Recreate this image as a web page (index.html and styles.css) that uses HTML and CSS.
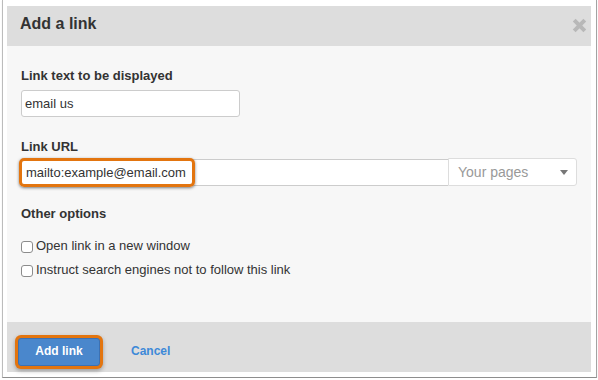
FILE: index.html
```html
<!DOCTYPE html>
<html>
<head>
<meta charset="utf-8">
<link rel="stylesheet" href="styles.css">
</head>
<body>
<div class="frame">
  <div class="dialog">
    <div class="header">
      <h1 class="title">Add a link</h1>
      <svg class="close" width="15" height="15" viewBox="0 0 15 15"><path d="M2.2 2.2 L12.8 12.8 M12.8 2.2 L2.2 12.8" stroke="#b8b8b8" stroke-width="4" stroke-linecap="butt" fill="none"/></svg>
    </div>
    <div class="body">
      <div class="label">Link text to be displayed</div>
      <input class="text-input" type="text" value="email us">
      <div class="label label-url">Link URL</div>
      <div class="url-row">
        <div class="url-wrap">
          <input class="url-input" type="text" value="mailto:example@email.com">
          <span class="highlight"></span>
        </div>
        <div class="select">
          <span>Your pages</span>
          <span class="caret"></span>
        </div>
      </div>
      <div class="label label-options">Other options</div>
      <label class="check-row first"><span class="box"></span>Open link in a new window</label>
      <label class="check-row"><span class="box"></span>Instruct search engines not to follow this link</label>
    </div>
    <div class="footer">
      <button class="btn-primary">Add link</button>
      <a class="cancel">Cancel</a>
    </div>
  </div>
</div>
</body>
</html>
```

FILE: styles.css
```css
html, body {
  margin: 0;
  padding: 0;
  background: #ffffff;
}
body {
  font-family: "Liberation Sans", Arial, sans-serif;
  color: #333333;
}
.frame {
  box-sizing: border-box;
  width: 595px;
  margin-left: 2px;
  padding: 6px 5px 5px 4px;
  background: #ffffff;
  border-left: 1px solid #bcbcbc;
  border-right: 1px solid #a3a3a3;
  border-bottom: 1px solid #8e8e8e;
  box-shadow: 0 1px 1px rgba(0,0,0,0.12);
}
.dialog {
  width: 584px;
  height: 366px;
  display: flex;
  flex-direction: column;
}
.header {
  box-sizing: border-box;
  height: 40px;
  background: #dddddd;
  display: flex;
  justify-content: space-between;
  align-items: flex-start;
  padding: 8px 4px 0 13px;
}
.title {
  margin: 0;
  font-size: 16px;
  line-height: 19px;
  font-weight: bold;
  color: #333333;
}
.close {
  margin-top: 4px;
  display: block;
}
.body {
  flex: 1;
  background: #f7f7f7;
  padding: 22px 14px 0;
}
.label {
  font-size: 13px;
  line-height: 15px;
  font-weight: bold;
  color: #333333;
}
.text-input {
  display: block;
  box-sizing: border-box;
  margin: 7px 0 0;
  width: 219px;
  height: 27px;
  border: 1px solid #cccccc;
  border-radius: 3px;
  background: #ffffff;
  padding: 0 0 0 3px;
  font-family: "Liberation Sans", Arial, sans-serif;
  font-size: 13px;
  color: #333333;
  outline: none;
}
.label-url {
  margin-top: 22px;
}
.url-row {
  display: flex;
  margin-top: 4px;
}
.url-wrap {
  position: relative;
  width: 427px;
  height: 27px;
  margin-top: 1px;
}
.url-input {
  display: block;
  box-sizing: border-box;
  margin: 0;
  width: 427px;
  height: 27px;
  border: 1px solid #cccccc;
  border-right: none;
  border-radius: 3px 0 0 3px;
  background: #ffffff;
  padding: 0 0 0 4px;
  font-family: "Liberation Sans", Arial, sans-serif;
  font-size: 13px;
  color: #333333;
  outline: none;
}
.highlight {
  position: absolute;
  left: -2px;
  top: -1px;
  width: 176px;
  height: 29px;
  box-sizing: border-box;
  border: 3px solid #e3750f;
  border-radius: 5px;
  box-shadow: 0 1px 3px rgba(0,0,0,0.5);
}
.select {
  box-sizing: border-box;
  width: 129px;
  height: 28px;
  border: 1px solid #dddddd;
  border-radius: 0 3px 3px 0;
  background: #ffffff;
  display: flex;
  align-items: center;
  justify-content: space-between;
  padding: 0 8px 0 9px;
  font-size: 14px;
  color: #999999;
}
.caret {
  width: 0;
  height: 0;
  border-left: 4px solid transparent;
  border-right: 4px solid transparent;
  border-top: 5px solid #777777;
  margin-top: 1px;
}
.label-options {
  margin-top: 20px;
}
.check-row {
  display: flex;
  align-items: center;
  height: 16px;
  margin-top: 8px;
  font-size: 13px;
  line-height: 16px;
  color: #333333;
}
.check-row.first {
  margin-top: 17px;
}
.box {
  box-sizing: border-box;
  width: 12px;
  height: 12px;
  border: 1px solid #8c8c8c;
  border-radius: 3px;
  background: #ffffff;
  margin-right: 3px;
  margin-top: 1px;
}
.footer {
  box-sizing: border-box;
  height: 50px;
  background: #dddddd;
  display: flex;
  align-items: flex-start;
  padding: 16px 0 0 11px;
}
.btn-primary {
  box-sizing: border-box;
  width: 82px;
  height: 28px;
  margin: 0;
  padding: 0 0 2px;
  background: #4a87cc;
  border: 1px solid #3c71b3;
  border-radius: 3px;
  color: #ffffff;
  font-family: "Liberation Sans", Arial, sans-serif;
  font-size: 12px;
  font-weight: bold;
  box-shadow: 0 0 0 3px #e3750f, 0 2px 4px 3px rgba(0,0,0,0.3);
}
.cancel {
  margin-left: 31px;
  line-height: 26px;
  font-size: 12px;
  font-weight: bold;
  color: #3d89d8;
}
```
